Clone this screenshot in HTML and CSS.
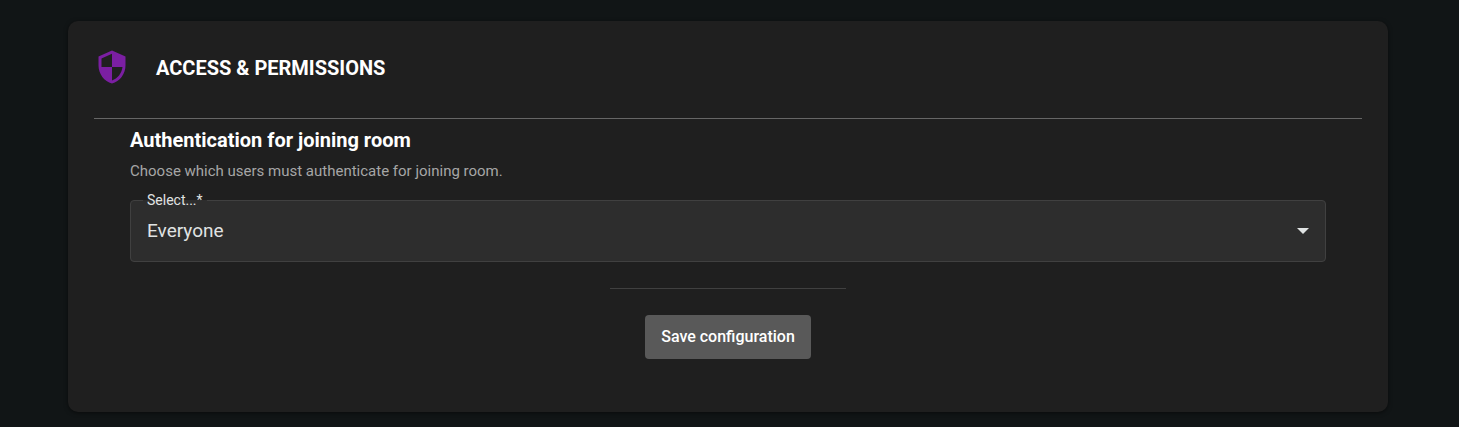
FILE: index.html
```html
<!DOCTYPE html>
<html lang="en">
<head>
<meta charset="utf-8">
<meta name="viewport" content="width=device-width, initial-scale=1">
<title>Access &amp; Permissions</title>
<link rel="stylesheet" href="styles.css">
</head>
<body>
<main class="page">
  <section class="card">
    <header class="card-header">
      <svg class="card-icon" viewBox="0 0 24 24" aria-hidden="true"><path d="M12 1L3 5v6c0 5.55 3.84 10.74 9 12 5.16-1.26 9-6.45 9-12V5l-9-4zm0 10.99h7c-.53 4.12-3.28 7.79-7 8.94V12H5V6.3l7-3.11v8.8z"/></svg>
      <h2 class="card-title">ACCESS &amp; PERMISSIONS</h2>
    </header>
    <form class="card-body">
      <h3 class="setting-title">Authentication for joining room</h3>
      <p class="setting-text">Choose which users must authenticate for joining room.</p>
      <div class="field">
        <select class="field-select" id="auth" required>
          <option>Everyone</option>
        </select>
        <label class="field-label" for="auth">Select...*</label>
        <svg class="field-arrow" viewBox="0 0 12 6" aria-hidden="true"><path d="M0 0h12L6 6z"/></svg>
      </div>
      <hr class="separator">
      <button class="save" type="button">Save configuration</button>
    </form>
  </section>
</main>
</body>
</html>
```
FILE: styles.css
```css
* {
  box-sizing: border-box;
}

body {
  margin: 0;
  background: #111516;
  color: #fff;
  font-family: Roboto, sans-serif;
}

.page {
  padding: 21px 71px 15px 68px;
}

.card {
  padding: 28px 26px 53px;
  border-radius: 10px;
  background: #1f1f1f;
  box-shadow: 0 1px 4px rgba(0, 0, 0, 0.5);
}

.card-header {
  display: flex;
  align-items: center;
  gap: 26px;
  padding-bottom: 33px;
  border-bottom: 1px solid #666;
}

.card-icon {
  width: 36px;
  height: 36px;
  fill: #7b1fa2;
}

.card-title,
.setting-title {
  margin: 0;
  font-size: 20px;
  font-weight: 700;
  line-height: 24px;
}

.card-title {
  padding-top: 2px;
}

.card-body {
  display: flex;
  flex-direction: column;
  padding: 9px 36px 0;
}

.setting-text {
  margin: 9px 0 19px;
  color: #a6a6a6;
  font-size: 15px;
  line-height: 20px;
}

.field {
  position: relative;
}

.field-select {
  display: block;
  width: 100%;
  height: 62px;
  padding: 0 16px;
  border: 1px solid #404040;
  border-radius: 4px;
  appearance: none;
  background: #2d2d2d;
  color: #e0e3e3;
  font: 400 19px/24px Roboto, sans-serif;
}

.field-label {
  position: absolute;
  top: -8px;
  left: 13px;
  padding: 0 4px;
  background: linear-gradient(#1f1f1f 8px, #2d2d2d 8px);
  color: #e0e3e3;
  font-size: 14px;
  line-height: 16px;
}

.field-arrow {
  position: absolute;
  top: 28px;
  right: 17px;
  width: 12px;
  height: 6px;
  fill: #e0e3e3;
  pointer-events: none;
}

.separator {
  width: 236px;
  margin: 26px auto;
  border: 0;
  border-top: 1px solid #404040;
}

.save {
  align-self: center;
  padding: 12px 16px;
  border: 0;
  border-radius: 4px;
  background: #595959;
  color: #fff;
  font: 500 16px/20px Roboto, sans-serif;
}
```
